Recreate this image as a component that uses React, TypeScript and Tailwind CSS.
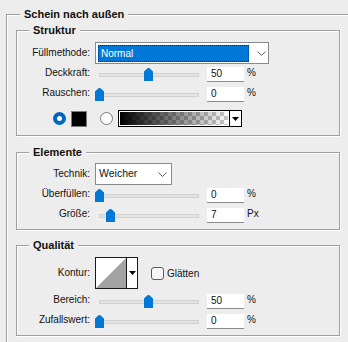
import React from 'react';

const GROUP =
  'relative border border-[#a0a0a0] shadow-[1px_1px_0_#ffffff,inset_1px_1px_0_#ffffff] w-[324px]';

function Group({ title, className, children }: { title: string; className: string; children: React.ReactNode }) {
  return (
    <div className={`${GROUP} ${className}`}>
      <span className="absolute -top-[8px] left-[12px] px-[4px] bg-[#ededed] font-bold text-[11px] leading-[14px]">
        {title}
      </span>
      {children}
    </div>
  );
}

function Label({ children }: { children: React.ReactNode }) {
  return <div className="w-[73px] mr-[5px] text-right leading-[14px] whitespace-nowrap">{children}</div>;
}

function Chevron({ className }: { className: string }) {
  return (
    <svg width="9" height="5" viewBox="0 0 9 5" className={className}>
      <polyline points="0.5,0.5 4.5,4.5 8.5,0.5" fill="none" stroke="#5c5c5c" strokeWidth="1" />
    </svg>
  );
}

function Arrow() {
  return (
    <svg width="7" height="4" viewBox="0 0 7 4">
      <polygon points="0,0 7,0 3.5,4" fill="#000" />
    </svg>
  );
}

function Thumb() {
  return (
    <svg width="9" height="13" viewBox="0 0 9 13">
      <path d="M3.5 0.3 Q4.5 -0.3 5.5 0.3 L9 3.5 V13 H0 V3.5 Z" fill="#0078d7" />
    </svg>
  );
}

function SliderRow({ label, value, unit, pct, className }: { label: string; value: string; unit: string; pct: number; className: string }) {
  return (
    <div className={`flex items-start h-[15px] ${className}`}>
      <Label>
        <span className="relative -top-[1px]">{label}</span>
      </Label>
      <div className="relative w-[112px] h-[15px]">
        <div className="absolute left-[4px] top-[6px] w-[100px] h-[4px] bg-[#e3e3e3] border border-[#d0d0d0]" />
        <div className="absolute top-[1px]" style={{ left: `${pct * 98}px` }}>
          <Thumb />
        </div>
      </div>
      <div className="w-[37px] h-[15px] bg-white border-b border-[#8a8a8a] pl-[4px] leading-[14px]">{value}</div>
      <span className="ml-[3px] leading-[12px]">{unit}</span>
    </div>
  );
}

export default function App() {
  return (
    <div className="w-[348px] h-[342px] bg-[#ededed] overflow-hidden font-['Liberation_Sans',Arial,sans-serif] text-[10px] text-[#111] pt-[14px] pl-[6px]">
      <div className="relative border-t border-l border-[#a0a0a0] shadow-[inset_1px_1px_0_#ffffff] pl-[9px] pt-[15px] h-[400px]">
        <span className="absolute -top-[8px] left-[13px] px-[4px] bg-[#ededed] font-bold text-[11px] leading-[14px]">
          Schein nach außen
        </span>

        <Group title="Struktur" className="h-[106px]">
          <div className="flex items-center h-[22px] mt-[11px]">
            <Label>Füllmethode:</Label>
            <div className="flex items-center w-[174px] h-[22px] bg-white border border-[#8a8a8a] p-[2px]">
              <div className="w-[152px] h-[17px] bg-[#0078d7] border border-dotted border-[#222] text-white pl-[2px] leading-[15px]">
                Normal
              </div>
              <Chevron className="ml-[8px]" />
            </div>
          </div>
          <SliderRow label="Deckkraft:" value="50" unit="%" pct={0.5} className="mt-[3px]" />
          <SliderRow label="Rauschen:" value="0" unit="%" pct={0} className="mt-[5px]" />
          <div className="flex items-center h-[17px] mt-[8px] pl-[36px]">
            <div className="w-[13px] h-[13px] rounded-full bg-[#0067c0] flex items-center justify-center">
              <div className="w-[5px] h-[5px] rounded-full bg-white" />
            </div>
            <div className="ml-[5px] w-[16px] h-[16px] border border-[#7a7a7a] bg-black" />
            <div className="ml-[13px] w-[13px] h-[13px] rounded-full bg-white border border-[#7a7a7a]" />
            <div className="ml-[5px] flex w-[124px] h-[17px] border border-black bg-white">
              <div className="w-[110px] h-full border border-white bg-[conic-gradient(#c8c8c8_25%,#ffffff_0_50%,#c8c8c8_0_75%,#ffffff_0)] bg-[length:8px_8px]">
                <div className="w-full h-full bg-gradient-to-r from-black to-transparent" />
              </div>
              <div className="flex-1 border-l border-black flex items-center justify-center">
                <Arrow />
              </div>
            </div>
          </div>
        </Group>

        <Group title="Elemente" className="h-[78px] mt-[16px]">
          <div className="flex items-center h-[22px] mt-[10px]">
            <Label>Technik:</Label>
            <div className="flex items-center justify-between w-[77px] h-[22px] bg-white border border-[#8a8a8a] pl-[3px] pr-[4px]">
              <span className="text-[10.5px]">Weicher</span>
              <Chevron className="" />
            </div>
          </div>
          <SliderRow label="Überfüllen:" value="0" unit="%" pct={0} className="mt-[3px]" />
          <SliderRow label="Größe:" value="7" unit="Px" pct={0.11} className="mt-[5px]" />
        </Group>

        <Group title="Qualität" className="h-[91px] mt-[15px]">
          <div className="flex items-center h-[32px] mt-[11px]">
            <Label>Kontur:</Label>
            <div className="flex w-[43px] h-[32px] border border-[#1a1a1a] bg-white">
              <svg width="30" height="30" viewBox="0 0 30 30" className="block">
                <polygon points="0,30 30,0 30,30" fill="#a3a3a3" />
              </svg>
              <div className="flex-1 border-l border-[#1a1a1a] flex items-center justify-center">
                <Arrow />
              </div>
            </div>
            <div className="ml-[13px] w-[13px] h-[13px] rounded-[3px] border border-[#5a5a5a] bg-[#f7f7f7]" />
            <span className="ml-[3px]">Glätten</span>
          </div>
          <SliderRow label="Bereich:" value="50" unit="%" pct={0.5} className="mt-[5px]" />
          <SliderRow label="Zufallswert:" value="0" unit="%" pct={0} className="mt-[5px]" />
        </Group>
      </div>
    </div>
  );
}
